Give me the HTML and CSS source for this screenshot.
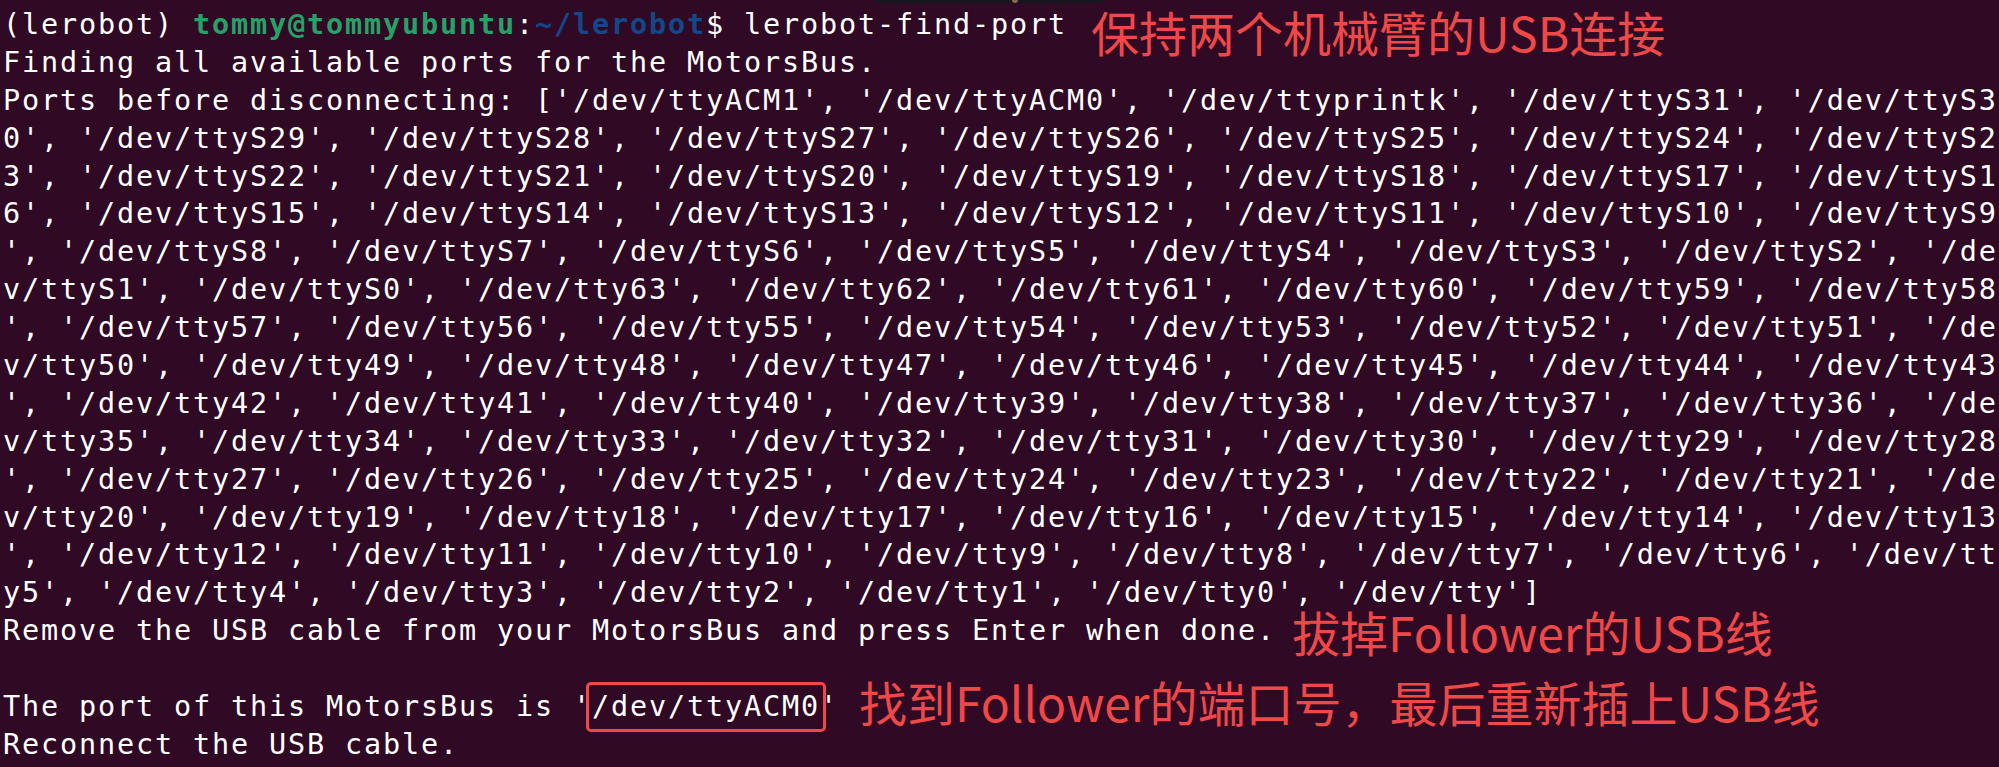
FILE: index.html
```html
<!DOCTYPE html>
<html lang="zh-CN">
<head>
<meta charset="utf-8">
<title>lerobot-find-port</title>
<link rel="stylesheet" href="styles.css">
</head>
<body>
<div class="peek"><span class="peek-dot"></span></div>
<main class="term">
<div class="line">(lerobot) <span class="user">tommy@tommyubuntu</span>:<span class="path">~/lerobot</span>$ lerobot-find-port<span class="note note-1">保持两个机械臂的USB连接</span></div>
<div class="line">Finding all available ports for the MotorsBus.</div>
<div class="line">Ports before disconnecting: ['/dev/ttyACM1', '/dev/ttyACM0', '/dev/ttyprintk', '/dev/ttyS31', '/dev/ttyS3</div>
<div class="line">0', '/dev/ttyS29', '/dev/ttyS28', '/dev/ttyS27', '/dev/ttyS26', '/dev/ttyS25', '/dev/ttyS24', '/dev/ttyS2</div>
<div class="line">3', '/dev/ttyS22', '/dev/ttyS21', '/dev/ttyS20', '/dev/ttyS19', '/dev/ttyS18', '/dev/ttyS17', '/dev/ttyS1</div>
<div class="line">6', '/dev/ttyS15', '/dev/ttyS14', '/dev/ttyS13', '/dev/ttyS12', '/dev/ttyS11', '/dev/ttyS10', '/dev/ttyS9</div>
<div class="line">', '/dev/ttyS8', '/dev/ttyS7', '/dev/ttyS6', '/dev/ttyS5', '/dev/ttyS4', '/dev/ttyS3', '/dev/ttyS2', '/de</div>
<div class="line">v/ttyS1', '/dev/ttyS0', '/dev/tty63', '/dev/tty62', '/dev/tty61', '/dev/tty60', '/dev/tty59', '/dev/tty58</div>
<div class="line">', '/dev/tty57', '/dev/tty56', '/dev/tty55', '/dev/tty54', '/dev/tty53', '/dev/tty52', '/dev/tty51', '/de</div>
<div class="line">v/tty50', '/dev/tty49', '/dev/tty48', '/dev/tty47', '/dev/tty46', '/dev/tty45', '/dev/tty44', '/dev/tty43</div>
<div class="line">', '/dev/tty42', '/dev/tty41', '/dev/tty40', '/dev/tty39', '/dev/tty38', '/dev/tty37', '/dev/tty36', '/de</div>
<div class="line">v/tty35', '/dev/tty34', '/dev/tty33', '/dev/tty32', '/dev/tty31', '/dev/tty30', '/dev/tty29', '/dev/tty28</div>
<div class="line">', '/dev/tty27', '/dev/tty26', '/dev/tty25', '/dev/tty24', '/dev/tty23', '/dev/tty22', '/dev/tty21', '/de</div>
<div class="line">v/tty20', '/dev/tty19', '/dev/tty18', '/dev/tty17', '/dev/tty16', '/dev/tty15', '/dev/tty14', '/dev/tty13</div>
<div class="line">', '/dev/tty12', '/dev/tty11', '/dev/tty10', '/dev/tty9', '/dev/tty8', '/dev/tty7', '/dev/tty6', '/dev/tt</div>
<div class="line">y5', '/dev/tty4', '/dev/tty3', '/dev/tty2', '/dev/tty1', '/dev/tty0', '/dev/tty']</div>
<div class="line">Remove the USB cable from your MotorsBus and press Enter when done.<span class="note note-2">拔掉Follower的USB线</span></div>
<div class="line"> </div>
<div class="line">The port of this MotorsBus is '<span class="hl">/dev/ttyACM0</span>'<span class="note note-3">找到Follower的端口号，最后重新插上USB线</span></div>
<div class="line">Reconnect the USB cable.</div>
</main>
</body>
</html>
```
FILE: styles.css
```css
html, body {
  margin: 0;
  padding: 0;
}

body {
  background: #300a24;
  width: 1999px;
  height: 767px;
  overflow: hidden;
  position: relative;
}

.term {
  padding: 6px 0 0 3px;
  font-family: "DejaVu Sans Mono", "Liberation Mono", monospace;
  font-size: 28.5px;
  letter-spacing: 1.84px;
  line-height: 37.9px;
  color: #ffffff;
}

.line {
  white-space: pre;
  height: 37.9px;
}

.user {
  color: #26a269;
  font-weight: bold;
}

.path {
  color: #12488b;
  font-weight: bold;
}

.hl {
  position: relative;
}

.hl::after {
  content: "";
  position: absolute;
  left: -6px;
  right: -6px;
  top: -8px;
  bottom: -9px;
  border: 3px solid #ef4848;
  border-radius: 5px;
}

.note {
  font-family: "Noto Sans CJK SC", "Noto Sans", sans-serif;
  font-size: 48px;
  letter-spacing: 0;
  line-height: 0;
  color: #f04848;
}

.note-1 {
  margin-left: 24px;
  vertical-align: -18px;
}

.note-2 {
  margin-left: 16px;
  vertical-align: -12px;
}

.note-3 {
  margin-left: 20px;
  vertical-align: -6px;
}

.peek {
  position: absolute;
  top: 0;
  left: 876px;
  width: 227px;
  height: 3px;
  background: #17161f;
}

.peek-dot {
  position: absolute;
  left: 136px;
  top: 0;
  width: 6px;
  height: 3px;
  border-radius: 0 0 3px 3px;
  background: #8a6a48;
}
```
